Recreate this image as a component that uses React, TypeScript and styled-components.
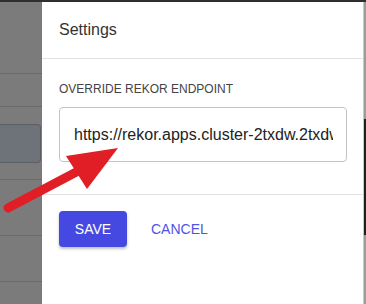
import styled, { createGlobalStyle } from 'styled-components'

const GlobalStyle = createGlobalStyle`
  html, body {
    margin: 0;
    padding: 0;
    width: 366px;
    height: 304px;
    overflow: hidden;
    background: #7b7b7b;
  }
  * {
    box-sizing: border-box;
  }
`

const leftRows = [
  { height: 72, kind: 'line' },
  { height: 33, kind: 'line' },
  { height: 17, kind: 'gap' },
  { height: 39, kind: 'box' },
  { height: 17, kind: 'line' },
  { height: 56, kind: 'line' },
  { height: 46, kind: 'line' }
]

function App() {
  return (
    <>
      <GlobalStyle />
      <Screen>
        <TopBar />
        <Main>
          <Backdrop>
            {leftRows.map((row, i) =>
              row.kind === 'box' ? (
                <GhostBox key={i} $height={row.height} />
              ) : (
                <GhostRow key={i} $height={row.height} $line={row.kind === 'line'} />
              )
            )}
          </Backdrop>
          <Panel>
            <Header>Settings</Header>
            <Body>
              <Label htmlFor="rekor-endpoint">Override Rekor Endpoint</Label>
              <Input
                id="rekor-endpoint"
                readOnly
                value="https://rekor.apps.cluster-2txdw.2txdw.sandbox.opentlc.com"
              />
            </Body>
            <Footer>
              <SaveButton>Save</SaveButton>
              <CancelButton>Cancel</CancelButton>
            </Footer>
          </Panel>
          <Scrollbar>
            <ScrollTrack $height={117} />
            <ScrollThumb $height={116} />
            <ScrollTrack $height={69} />
          </Scrollbar>
        </Main>
        <Arrow width="366" height="304" viewBox="0 0 366 304">
          <line x1="8" y1="208" x2="82" y2="169" stroke="#e11d26" strokeWidth="9" strokeLinecap="round" />
          <polygon points="118,148 66,156 87,189" fill="#e11d26" />
        </Arrow>
      </Screen>
    </>
  )
}

export default App

const Screen = styled.div`
  position: relative;
  width: 366px;
  height: 304px;
  display: flex;
  flex-direction: column;
  font-family: 'Liberation Sans', Arial, sans-serif;
`

const TopBar = styled.div`
  height: 2px;
  background: #2e2e2e;
`

const Main = styled.div`
  flex: 1;
  display: flex;
`

const Backdrop = styled.div`
  width: 42px;
  background: #7b7b7b;
  display: flex;
  flex-direction: column;
`

const GhostRow = styled.div<{ $height: number; $line: boolean }>`
  height: ${({ $height }) => $height}px;
  border-bottom: ${({ $line }) => ($line ? '1px solid #6a6a6a' : 'none')};
  flex-shrink: 0;
`

const GhostBox = styled.div<{ $height: number }>`
  height: ${({ $height }) => $height}px;
  margin-right: 1px;
  background: #6e7279;
  border: 1px solid #5c5f63;
  border-left: none;
  border-radius: 0 4px 4px 0;
  flex-shrink: 0;
`

const Panel = styled.div`
  flex: 1;
  background: #ffffff;
  border-right: 1px solid #c8c8c8;
  display: flex;
  flex-direction: column;
  min-width: 0;
`

const Header = styled.div`
  height: 57px;
  display: flex;
  align-items: center;
  padding: 0 17px;
  font-size: 16px;
  color: #333333;
  border-bottom: 1px solid #e2e2e2;
`

const Body = styled.div`
  padding: 22px 16px 32px 17px;
  display: flex;
  flex-direction: column;
  gap: 10px;
  border-bottom: 1px solid #e2e2e2;
`

const Label = styled.label`
  font-size: 12px;
  line-height: 16px;
  text-transform: uppercase;
  color: #444444;
`

const Input = styled.input`
  width: 100%;
  height: 55px;
  margin: 0;
  border: 1px solid #c4c4c4;
  border-radius: 4px;
  padding: 0 13px 0 14px;
  background: #ffffff;
  font-family: inherit;
  font-size: 16px;
  color: #222222;
  outline: none;
`

const Footer = styled.div`
  padding: 16px 17px;
  display: flex;
  align-items: center;
  gap: 16px;
`

const SaveButton = styled.button`
  width: 68px;
  height: 36px;
  border: none;
  border-radius: 4px;
  background: #4649e1;
  color: #ffffff;
  font-family: inherit;
  font-size: 14px;
  text-transform: uppercase;
  box-shadow: 0 2px 3px rgba(0, 0, 0, 0.25);
`

const CancelButton = styled.button`
  height: 36px;
  padding: 0 8px;
  border: none;
  background: none;
  color: #4f54e6;
  font-family: inherit;
  font-size: 14px;
  text-transform: uppercase;
`

const Scrollbar = styled.div`
  width: 2px;
  display: flex;
  flex-direction: column;
`

const ScrollTrack = styled.div<{ $height: number }>`
  height: ${({ $height }) => $height}px;
  background: #9c9c9c;
`

const ScrollThumb = styled.div<{ $height: number }>`
  height: ${({ $height }) => $height}px;
  background: #1e1e1e;
`

const Arrow = styled.svg`
  position: absolute;
  left: 0;
  top: 0;
  pointer-events: none;
`
